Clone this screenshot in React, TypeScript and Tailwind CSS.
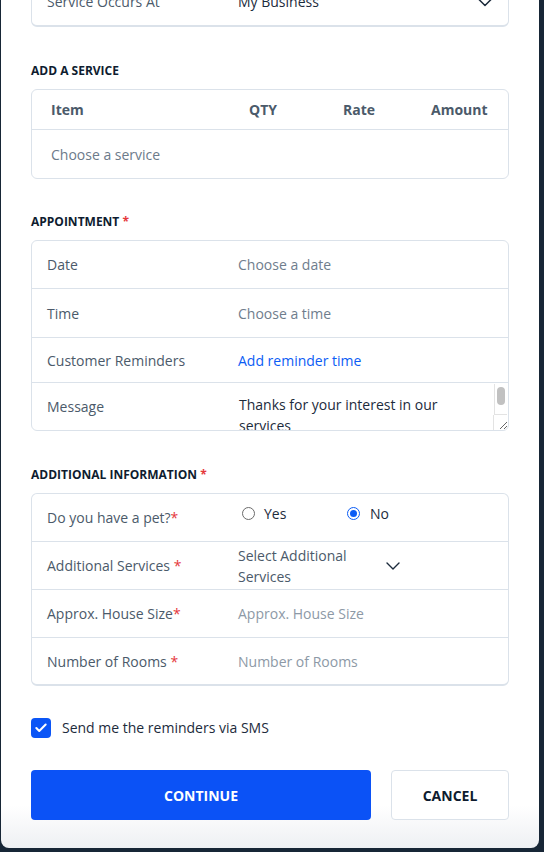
import { ChevronDown, Check } from 'lucide-react';

const Req = () => <span className="text-[#e5383b]">*</span>;

const Heading = ({ children }: { children: React.ReactNode }) => (
  <h3 className="text-[12px] font-bold uppercase text-[#0e1c2f] leading-4 mb-[10px]">{children}</h3>
);

const Row = ({ label, children, h = 'h-[48px]', last = false }: { label: React.ReactNode; children?: React.ReactNode; h?: string; last?: boolean }) => (
  <div className={`flex items-center ${h} ${last ? '' : 'border-b border-[#dbe2ea]'}`}>
    <div className="w-[206px] pl-[15px] text-[14px] text-[#4b5a6a]">{label}</div>
    <div className="flex-1 text-[14px]">{children}</div>
  </div>
);

export default function App() {
  return (
    <div className="min-h-screen bg-[#172636] pl-[1px] pr-[5px]" style={{ fontFamily: '"Open Sans", "Noto Sans", sans-serif' }}>
      <div className="h-[848px] overflow-hidden rounded-b-lg bg-gradient-to-b from-white from-[95%] to-[#eef0f3]">
        <div className="px-[30px]">
          {/* top card, partly scrolled out of view */}
          <div className="-mt-[23px] rounded-md border border-[#dbe2ea] border-b-2 bg-white">
            <div className="flex h-[47px] items-center">
              <div className="w-[206px] pl-[15px] text-[14px] text-[#4b5a6a]">Service Occurs At</div>
              <div className="flex-1 text-[14px] text-[#1c2b3c]">My Business</div>
              <ChevronDown className="mr-[9px] h-[28px] w-[28px] text-[#1c2b3c]" strokeWidth={1.3} />
            </div>
          </div>

          <div className="mt-[36px]">
            <Heading>Add a service</Heading>
            <div className="rounded-md border border-[#dbe2ea] bg-white">
              <div className="flex h-[40px] items-center border-b border-[#dbe2ea] pl-[19px] pr-5 text-[14px] font-bold text-[#4b5a6a]">
                <span className="w-[198px]">Item</span>
                <span className="w-[94px]">QTY</span>
                <span className="w-[88px]">Rate</span>
                <span className="flex-1">Amount</span>
              </div>
              <div className="flex h-[48px] items-center pl-[19px] text-[14px] text-[#6c7a8a]">Choose a service</div>
            </div>
          </div>

          <div className="mt-[35px]">
            <Heading>Appointment <Req /></Heading>
            <div className="rounded-md border border-[#dbe2ea] bg-white">
              <Row label="Date"><span className="text-[#6f7d8d]">Choose a date</span></Row>
              <Row label="Time" h="h-[49px]"><span className="text-[#6f7d8d]">Choose a time</span></Row>
              <Row label="Customer Reminders" h="h-[45px]"><span className="text-[#0b5cf5]">Add reminder time</span></Row>
              <Row label="Message" h="h-[47px]" last>
                <div className="relative">
                  <textarea
                    defaultValue="Thanks for your interest in our services"
                    className="block h-[47px] w-full resize-y overflow-hidden rounded-br-md pl-[1px] pr-[50px] pt-[11px] text-[14px] leading-[21px] text-[#1c2b3c] outline-none"
                  />
                  {/* scrollbar */}
                  <div className="pointer-events-none absolute right-[1px] top-[1px] h-[31px] w-[13px] border-b border-l border-[#e3e3e3] bg-white">
                    <div className="mx-auto mt-[3px] h-[18px] w-[8px] rounded-full bg-[#c1c1c1]" />
                  </div>
                  <div className="pointer-events-none absolute bottom-0 right-[14px] top-[32px] border-l border-[#e3e3e3]" />
                </div>
              </Row>
            </div>
          </div>

          <div className="mt-[36px]">
            <Heading>Additional Information <Req /></Heading>
            <div className="rounded-md border border-[#dbe2ea] border-b-2 bg-white">
              <Row label={<>Do you have a pet?<Req /></>}>
                <div className="-mt-[9px] flex items-center text-[#1c2b3c]">
                  <label className="flex w-[109px] items-center gap-[9px] pl-[4px]">
                    <span className="h-[13px] w-[13px] rounded-full border border-[#6b6b6b] bg-white" />
                    Yes
                  </label>
                  <label className="flex items-center gap-[10px]">
                    <span className="flex h-[13px] w-[13px] items-center justify-center rounded-full border-[1.5px] border-[#0b5cf5] bg-white">
                      <span className="h-[7px] w-[7px] rounded-full bg-[#0b5cf5]" />
                    </span>
                    No
                  </label>
                </div>
              </Row>
              <Row label={<>Additional Services <Req /></>}>
                <div className="flex w-[167px] items-center justify-between leading-[21px] text-[#4b5a6a]">
                  <span className="w-[130px]">Select Additional Services</span>
                  <ChevronDown className="h-[24px] w-[24px] text-[#1c2b3c]" strokeWidth={1.4} />
                </div>
              </Row>
              <Row label={<>Approx. House Size<Req /></>}><span className="text-[#8d99a6]">Approx. House Size</span></Row>
              <Row label={<>Number of Rooms <Req /></>} h="h-[46px]" last><span className="text-[#8d99a6]">Number of Rooms</span></Row>
            </div>
          </div>

          <label className="mt-[31px] flex items-center gap-[11px]">
            <span className="flex h-[20px] w-[20px] items-center justify-center rounded-[4px] bg-[#0b55f6]">
              <Check className="h-[14px] w-[14px] text-white" strokeWidth={3.5} />
            </span>
            <span className="text-[14px] text-[#1c2b3c]">Send me the reminders via SMS</span>
          </label>

          <div className="mt-[32px] flex gap-5">
            <button className="h-[50px] w-[340px] rounded-[4px] bg-[#0b52f6] text-[14px] font-bold text-white">CONTINUE</button>
            <button className="h-[50px] flex-1 rounded-[4px] border border-[#dbe2ea] bg-white text-[14px] font-bold text-[#0e1c2f]">CANCEL</button>
          </div>
        </div>
      </div>
    </div>
  );
}
